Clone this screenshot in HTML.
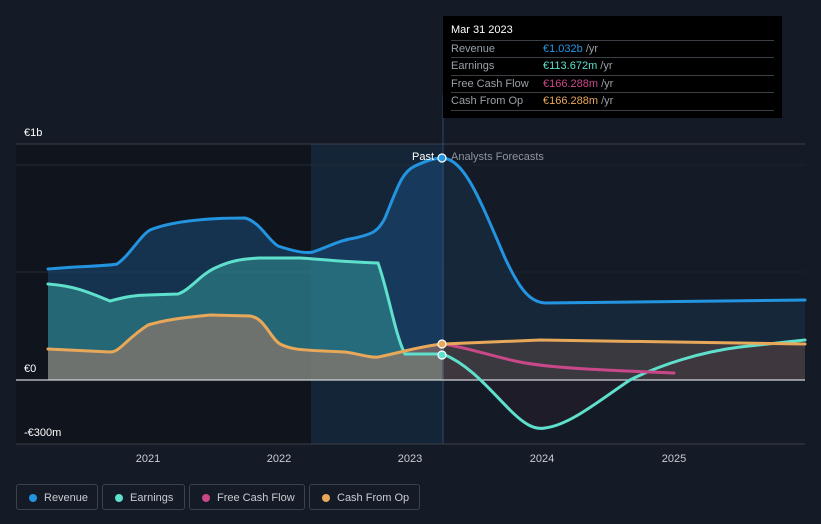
<!DOCTYPE html>
<html><head><meta charset="utf-8"><style>
body{margin:0;width:821px;height:524px;background:#151b26;font-family:"Liberation Sans",sans-serif;overflow:hidden;position:relative}
.tt{position:absolute;left:443px;top:16px;width:339px;height:102px;background:#000}
.tt .h{position:absolute;left:8px;top:8px;color:#fff;font-size:11px}
.tt .r{position:absolute;left:8px;width:323px;height:17px;border-top:1px solid #3a3f46;font-size:11px;color:#9aa0a8;line-height:17px}
.tt .r span{position:absolute;left:92px}
.lg{position:absolute;top:484px;height:26px;border:1px solid #3c424b;border-radius:3px;font-size:11px;color:#c8ccd2;line-height:26px;box-sizing:border-box}
.lg i{position:absolute;left:12px;top:9px;width:8px;height:8px;border-radius:50%}
.lg b{font-weight:normal;position:absolute;left:27px}
</style></head><body>
<svg width="821" height="524" style="position:absolute;left:0;top:0">
<rect x="16" y="144" width="295" height="300" fill="#10141c"/>
<rect x="311" y="144" width="132" height="300" fill="#152a40" opacity="0.7"/>
<line x1="16" y1="144" x2="805" y2="144" stroke="#3a3f47"/>
<line x1="16" y1="165" x2="805" y2="165" stroke="#232a35"/>
<line x1="16" y1="272" x2="805" y2="272" stroke="#232a35"/>
<line x1="16" y1="444" x2="805" y2="444" stroke="#3a3f47"/>
<path d="M48,269 C80,266 110,266 117,264 C130,255 140,236 150,230 C170,222 200,218 245,218 C260,222 268,240 278,246 C290,250 305,254 313,252 C330,246 340,240 355,238 C372,234 378,232 385,218 C398,186 402,172 415,166 C428,160 435,158 443,158 C465,160 480,200 505,258 C520,290 530,302 545,303 L805,300 L805,380 L48,380Z" fill="#1a4b78" opacity="0.55"/>
<path d="M48,284 C75,286 88,292 110,301 C125,297 135,295 148,295 L178,294 C190,290 200,275 215,268 C230,261 240,259 260,258 L300,258 C320,259 340,262 378,263 C388,290 395,335 405,354 L443,354 L443,380 L48,380Z" fill="#3aa8a5" opacity="0.45"/>
<path d="M443,354 C470,365 490,390 510,410 C525,425 535,430 545,428 C570,425 600,400 630,380 C660,365 700,352 740,347 L805,340 L805,380 L443,380Z" fill="#3a2030" opacity="0.55"/>
<path d="M48,349 L110,352 C120,352 125,340 148,325 C165,320 180,318 210,315 L250,316 C265,318 270,338 280,344 C292,350 300,350 345,352 C360,354 370,358 378,357 C395,354 420,346 443,344 L540,340 L805,344 L805,380 L48,380Z" fill="#a07a6a" opacity="0.6"/>
<rect x="444" y="145" width="361" height="298" fill="#151b26" opacity="0.55"/>
<line x1="443" y1="95" x2="443" y2="444" stroke="#2b4a66"/>
<line x1="16" y1="380" x2="805" y2="380" stroke="#d0d4d8" stroke-width="1.2"/>
<g fill="none" stroke-width="3" stroke-linecap="round">
<path d="M48,269 C80,266 110,266 117,264 C130,255 140,236 150,230 C170,222 200,218 245,218 C260,222 268,240 278,246 C290,250 305,254 313,252 C330,246 340,240 355,238 C372,234 378,232 385,218 C398,186 402,172 415,166 C428,160 435,158 443,158 C465,160 480,200 505,258 C520,290 530,302 545,303 L805,300" stroke="#2394e0"/>
<path d="M48,284 C75,286 88,292 110,301 C125,297 135,295 148,295 L178,294 C190,290 200,275 215,268 C230,261 240,259 260,258 L300,258 C320,259 340,262 378,263 C388,290 395,335 405,354 L443,354 C470,365 490,390 510,410 C525,425 535,430 545,428 C570,425 600,400 630,380 C660,365 700,352 740,347 L805,340" stroke="#5ee0cc"/>
<path d="M443,344 C470,348 490,356 520,362 C550,368 600,370 674,373" stroke="#c8488a"/>
<path d="M48,349 L110,352 C120,352 125,340 148,325 C165,320 180,318 210,315 L250,316 C265,318 270,338 280,344 C292,350 300,350 345,352 C360,354 370,358 378,357 C395,354 420,346 443,344 L540,340 L805,344" stroke="#e8a85a"/>
</g>
<circle cx="442" cy="158" r="4" fill="#2394e0" stroke="#fff" stroke-width="1.2"/>
<circle cx="442" cy="344" r="4" fill="#e8a85a" stroke="#fff" stroke-width="1.2"/>
<circle cx="442" cy="355" r="4" fill="#5ee0cc" stroke="#fff" stroke-width="1.2"/>
<g font-family="Liberation Sans,sans-serif" font-size="11">
<text x="24" y="136" fill="#fff">€1b</text>
<text x="24" y="372" fill="#fff">€0</text>
<text x="24" y="436" fill="#fff">-€300m</text>
<text x="412" y="160" fill="#fff">Past</text>
<text x="451" y="160" fill="#8e949c">Analysts Forecasts</text>
<g fill="#c8ccd2" text-anchor="middle"><text x="148" y="462">2021</text><text x="279" y="462">2022</text><text x="410" y="462">2023</text><text x="542" y="462">2024</text><text x="674" y="462">2025</text></g>
</g>
</svg>
<div class="tt"><div class="h">Mar 31 2023</div>
<div class="r" style="top:24px">Revenue<span><em style="font-style:normal;color:#2394e0">€1.032b</em> /yr</span></div>
<div class="r" style="top:41px">Earnings<span><em style="font-style:normal;color:#5ee0cc">€113.672m</em> /yr</span></div>
<div class="r" style="top:59px">Free Cash Flow<span><em style="font-style:normal;color:#c8488a">€166.288m</em> /yr</span></div>
<div class="r" style="top:76px;border-bottom:1px solid #3a3f46">Cash From Op<span><em style="font-style:normal;color:#e8a85a">€166.288m</em> /yr</span></div>
</div>
<div class="lg" style="left:16px;width:82px"><i style="background:#2394e0"></i><b>Revenue</b></div>
<div class="lg" style="left:102px;width:83px"><i style="background:#5ee0cc"></i><b>Earnings</b></div>
<div class="lg" style="left:189px;width:116px"><i style="background:#c8488a"></i><b>Free Cash Flow</b></div>
<div class="lg" style="left:309px;width:111px"><i style="background:#e8a85a"></i><b>Cash From Op</b></div>
</body></html>
